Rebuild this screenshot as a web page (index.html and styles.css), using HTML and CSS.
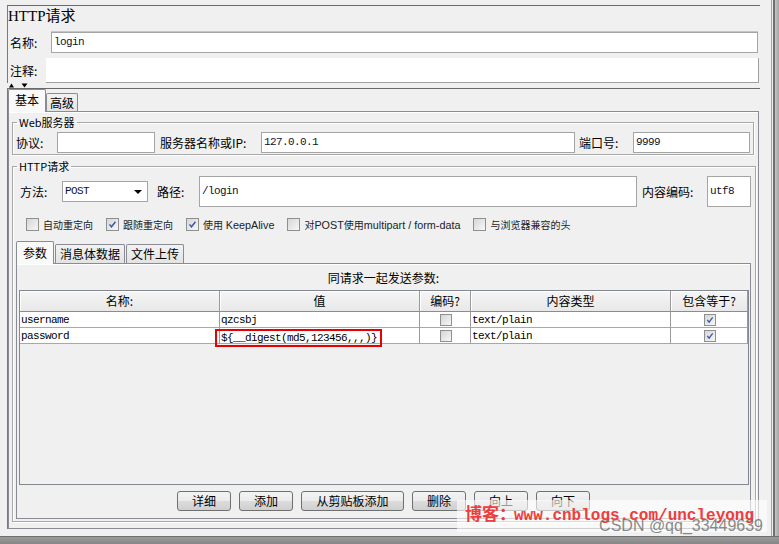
FILE: index.html
```html
<!DOCTYPE html>
<html lang="zh-CN">
<head>
    <meta charset="UTF-8">
    <title>HTTP请求</title>
    <link rel="stylesheet" href="styles.css">
</head>
<body>
    <div class="window">
        <div class="window-body">
            <div class="main">
                <section class="head-panel">
                    <div class="title">HTTP请求</div>
                    <div class="name-row">
                        <span class="label name-label">名称:</span>
                        <div class="text-field name-field">login</div>
                    </div>
                    <div class="note-row">
                        <span class="label note-label">注释:</span>
                        <div class="note-field"></div>
                    </div>
                </section>
                <div class="splitter">
                    <svg width="22" height="5" viewBox="0 0 22 5"><path d="M1 4.5L3.5 0.5L6 4.5Z"/><path d="M13.5 0.5L19.5 0.5L16.5 4.5Z"/></svg>
                </div>
                <section class="body-panel">
                    <div class="tab-strip">
                        <span class="tab active">基本</span>
                        <span class="tab">高级</span>
                    </div>
                    <div class="tab-content">
                        <fieldset class="group web-group">
                            <legend>Web服务器</legend>
                            <div class="field-row">
                                <span class="label protocol-label">协议:</span>
                                <div class="text-field protocol-field"></div>
                                <span class="label server-label">服务器名称或IP:</span>
                                <div class="text-field server-field">127.0.0.1</div>
                                <span class="label port-label">端口号:</span>
                                <div class="text-field port-field">9999</div>
                            </div>
                        </fieldset>
                        <fieldset class="group http-group">
                            <legend>HTTP请求</legend>
                            <div class="field-row request-row">
                                <span class="label method-label">方法:</span>
                                <div class="select-field">POST<span class="caret"></span></div>
                                <span class="label path-label">路径:</span>
                                <div class="text-field path-field">/login</div>
                                <span class="label encoding-label">内容编码:</span>
                                <div class="text-field encoding-field">utf8</div>
                            </div>
                            <div class="check-row">
                                <span class="check-item"><span class="checkbox"></span><span>自动重定向</span></span>
                                <span class="check-item"><span class="checkbox"><svg viewBox="0 0 13 13"><path d="M3 6.3l2.3 2.9L10 3.2"/></svg></span><span>跟随重定向</span></span>
                                <span class="check-item"><span class="checkbox"><svg viewBox="0 0 13 13"><path d="M3 6.3l2.3 2.9L10 3.2"/></svg></span><span>使用 <span class="latin">KeepAlive</span></span></span>
                                <span class="check-item"><span class="checkbox"></span><span>对<span class="latin">POST</span>使用<span class="latin">multipart / form-data</span></span></span>
                                <span class="check-item"><span class="checkbox"></span><span>与浏览器兼容的头</span></span>
                            </div>
                            <div class="tab-strip inner-tabs">
                                <span class="tab active">参数</span>
                                <span class="tab">消息体数据</span>
                                <span class="tab">文件上传</span>
                            </div>
                            <div class="param-panel">
                                <div class="param-title">同请求一起发送参数:</div>
                                <div class="table-frame">
                                    <div class="param-grid">
                                        <div class="cell head">名称:</div>
                                        <div class="cell head">值</div>
                                        <div class="cell head">编码?</div>
                                        <div class="cell head">内容类型</div>
                                        <div class="cell head">包含等于?</div>

                                        <div class="cell">username</div>
                                        <div class="cell">qzcsbj</div>
                                        <div class="cell check-cell"><span class="checkbox small"></span></div>
                                        <div class="cell">text/plain</div>
                                        <div class="cell check-cell"><span class="checkbox small"><svg viewBox="0 0 13 13"><path d="M3 6.3l2.3 2.9L10 3.2"/></svg></span></div>

                                        <div class="cell">password</div>
                                        <div class="cell"><span class="marked">${__digest(md5,123456,,,)}</span></div>
                                        <div class="cell check-cell"><span class="checkbox small"></span></div>
                                        <div class="cell">text/plain</div>
                                        <div class="cell check-cell"><span class="checkbox small"><svg viewBox="0 0 13 13"><path d="M3 6.3l2.3 2.9L10 3.2"/></svg></span></div>
                                    </div>
                                </div>
                                <div class="button-row">
                                    <span class="button">详细</span>
                                    <span class="button">添加</span>
                                    <span class="button wide">从剪贴板添加</span>
                                    <span class="button">删除</span>
                                    <span class="button">向上</span>
                                    <span class="button">向下</span>
                                </div>
                            </div>
                        </fieldset>
                    </div>
                </section>
            </div>
            <div class="edge"></div>
        </div>
        <div class="bottom-edge"></div>
    </div>

    <div class="watermark">
        <div class="blog-text"><span class="cn">博客：</span><span class="url">www.cnblogs.com/uncleyong</span></div>
        <div class="csdn-text">CSDN @qq_33449639</div>
    </div>
</body>
</html>
```

FILE: styles.css
```css
* {
    margin: 0;
    padding: 0;
    box-sizing: border-box;
}

body {
    width: 779px;
    height: 544px;
    overflow: hidden;
    position: relative;
    background: #f0f0f0;
    font-family: "Noto Sans CJK SC", "Liberation Sans", sans-serif;
    font-size: 12px;
    color: #000;
}

/* window frame */
.window-body {
    display: flex;
    height: 536px;
}
.main {
    width: 761px;
}
.edge {
    flex: 1;
    background: linear-gradient(to right, #f0f0f0 0 10px, #a3a3a3 10px 11px, #f0f0f0 11px 12px, #6f6f6f 12px 14px, #c4c4c4 14px, #a6a6a6);
}
.bottom-edge {
    height: 8px;
    background: linear-gradient(#6f6f6f 0 1px, #9a9a9a 1px, #868686);
}

/* shared controls */
.label {
    white-space: nowrap;
}
.text-field, .select-field {
    background: #fff;
    border: 1px solid #a5a5a5;
    padding-left: 2px;
    font-family: "Liberation Mono", monospace;
    font-size: 11px;
    letter-spacing: -0.6px;
    color: #101030;
    white-space: nowrap;
}
.checkbox {
    display: inline-block;
    width: 13px;
    height: 13px;
    border: 1px solid #8e8f8f;
    background: linear-gradient(135deg, #d6d6d6, #f7f7f7);
    flex-shrink: 0;
}
.checkbox svg {
    display: block;
    width: 100%;
    height: 100%;
    fill: none;
    stroke: #3c55a5;
    stroke-width: 1.7;
}
.checkbox.small {
    width: 12px;
    height: 12px;
}

/* top panel */
.head-panel {
    margin: 5px 0 0 7px;
    width: 753px;
    border-top: 1px solid #696969;
    border-left: 1px solid #7a7a7a;
}
.title {
    height: 25px;
    line-height: 20px;
    font-family: "Liberation Serif", "Noto Sans CJK SC", serif;
    font-size: 15px;
}
.name-row {
    display: flex;
    height: 22px;
    padding-top: 1px;
}
.name-label {
    width: 43px;
    padding-left: 2px;
    line-height: 21px;
}
.name-field {
    width: 707px;
    height: 21px;
    line-height: 19px;
    box-shadow: 0 -1px 0 #c6c6c6;
}
.note-row {
    display: flex;
    height: 30px;
    padding-top: 5px;
}
.note-label {
    width: 38px;
    padding-left: 2px;
    line-height: 25px;
}
.note-field {
    width: 713px;
    height: 25px;
    background: #fff;
    border-right: 1px solid #a0a0a0;
    border-bottom: 1px solid #a0a0a0;
}
.splitter {
    height: 5px;
    padding-left: 8px;
}
.splitter svg {
    display: block;
    fill: #000;
}

/* tabs */
.body-panel {
    margin-left: 7px;
    width: 753px;
    border-top: 1px solid #696969;
    border-left: 1px solid #7a7a7a;
}
.tab-strip {
    display: flex;
    align-items: flex-end;
    height: 22px;
}
.tab {
    height: 18px;
    padding: 0 3px;
    line-height: 17px;
    border: 1px solid #898c95;
    border-bottom: none;
    border-radius: 2px 2px 0 0;
    background: linear-gradient(#f2f2f2, #e3e3e3);
    white-space: nowrap;
}
.tab.active {
    height: 23px;
    margin-bottom: -1px;
    padding: 0 6px;
    line-height: 20px;
    background: #f9f9f9;
    position: relative;
    z-index: 1;
}
.tab-content {
    width: 751px;
    height: 418px;
    border: 1px solid #898c95;
    box-shadow: inset 0 1px 0 #fff;
    padding: 4px 4px 6px 3px;
}

/* fieldsets */
.group {
    width: 742px;
    border: 1px solid #a8a8a8;
    box-shadow: inset 1px 1px 0 #fff, 1px 1px 0 #fff;
    padding: 4px 3px 1px 3px;
}
.group legend {
    margin-left: 1px;
    padding: 0 2px;
    font-size: 11px;
    line-height: 12px;
}
.field-row {
    display: flex;
    align-items: center;
    height: 21px;
}
.field-row .text-field {
    height: 21px;
    line-height: 19px;
}
.protocol-label { width: 41px; }
.protocol-field { width: 98px; }
.server-label { width: 101px; margin-left: 5px; }
.server-field { width: 314px; }
.port-label { width: 54px; margin-left: 4px; }
.port-field { flex: 1; }

.http-group {
    margin-top: 5px;
    padding: 4px 4px 2px 3px;
}
.request-row {
    height: 31px;
    padding-left: 4px;
}
.request-row .text-field {
    height: 31px;
    line-height: 29px;
}
.method-label { width: 42px; }
.select-field {
    width: 86px;
    height: 21px;
    line-height: 19px;
    display: flex;
    align-items: center;
}
.caret {
    margin-left: auto;
    margin-right: 5px;
    border-left: 4px solid transparent;
    border-right: 4px solid transparent;
    border-top: 4px solid #000;
}
.path-label { width: 42px; margin-left: 9px; }
.path-field { width: 438px; }
.encoding-label { width: 65px; margin-left: 5px; }
.encoding-field { flex: 1; }

.check-row {
    display: flex;
    align-items: center;
    gap: 13px;
    height: 13px;
    margin-top: 11px;
    padding-left: 10px;
    font-family: "Liberation Sans", "Noto Sans CJK SC", sans-serif;
    font-size: 10px;
    color: #222;
}
.check-item {
    display: flex;
    align-items: center;
    white-space: nowrap;
}
.check-item .checkbox {
    margin-right: 4px;
}
.check-item .latin {
    font-size: 10.8px;
}

.inner-tabs {
    margin-top: 10px;
}
.inner-tabs .tab {
    height: 19px;
    padding: 0 4px;
    margin-left: 1px;
    line-height: 18px;
}
.inner-tabs .tab.active {
    height: 23px;
    margin-left: 0;
    padding: 0 6px;
    line-height: 21px;
}

/* parameter table */
.param-panel {
    height: 256px;
    border: 1px solid #898c95;
    box-shadow: inset 0 1px 0 #fff;
    padding: 0 1px 7px 1px;
}
.param-title {
    height: 26px;
    padding-top: 3px;
    line-height: 22px;
    text-align: center;
}
.table-frame {
    height: 195px;
    margin-left: 1px;
    width: 730px;
    border: 1px solid #828790;
    background: #f0f0f0;
}
.param-grid {
    display: grid;
    grid-template-columns: 200px 200px 51px 200px 77px;
    grid-template-rows: 21px 16px 16px;
}
.cell {
    background: #fff;
    border-right: 1px solid #9a9a9a;
    border-bottom: 1px solid #a8a8a8;
    padding-left: 1px;
    font-family: "Liberation Mono", monospace;
    font-size: 11px;
    letter-spacing: -0.6px;
    line-height: 16px;
    white-space: nowrap;
}
.cell.head {
    padding: 0;
    background: linear-gradient(#f5f5f5, #e8e8e8);
    box-shadow: inset 1px 1px 0 #fff;
    border-bottom-color: #8c8c8c;
    font-family: "Noto Sans CJK SC", sans-serif;
    font-size: 12px;
    letter-spacing: 0;
    line-height: 20px;
    text-align: center;
}
.check-cell {
    display: flex;
    align-items: center;
    justify-content: center;
}
.marked {
    display: inline-block;
    height: 18px;
    margin: 1px 0 0 -6px;
    padding: 0 3px 0 4px;
    border: 2px solid #e60000;
    line-height: 14px;
    vertical-align: top;
}

.button-row {
    display: flex;
    justify-content: center;
    gap: 8px;
    margin-top: 6px;
}
.button {
    width: 54px;
    height: 20px;
    border: 1px solid #707070;
    border-radius: 3px;
    background: linear-gradient(#f3f3f3, #ebebeb 50%, #dcdcdc 50%, #cfcfcf);
    line-height: 18px;
    text-align: center;
}
.button.wide {
    width: 103px;
}

/* screenshot watermark over the corner */
.watermark {
    position: absolute;
    left: 457px;
    top: 500px;
    width: 310px;
    height: 32px;
    padding: 3px 4px 0 8px;
    background: rgba(255, 255, 255, 0.6);
}
.blog-text {
    height: 20px;
    line-height: 20px;
    color: #f03c3c;
    white-space: nowrap;
}
.blog-text .cn {
    font-size: 17px;
    font-weight: bold;
}
.blog-text .url {
    margin-left: -2px;
    font-family: "Liberation Mono", monospace;
    font-size: 16px;
    font-weight: bold;
}
.csdn-text {
    margin-top: -6px;
    text-align: right;
    line-height: 18px;
    font-family: "Liberation Sans", sans-serif;
    font-size: 16px;
    color: rgba(115, 115, 115, 0.85);
    white-space: nowrap;
}
```
